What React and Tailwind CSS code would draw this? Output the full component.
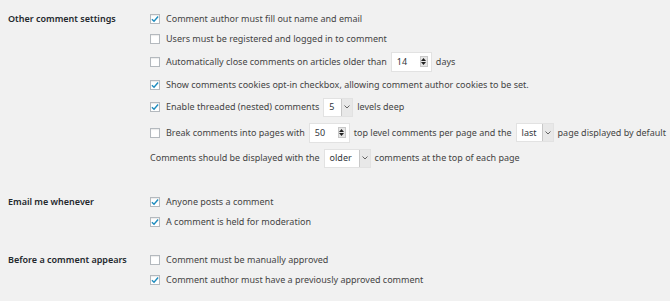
import React from 'react';

function Check({ checked }) {
  return (
    <span className="mr-[6px] flex h-[10px] w-[10px] shrink-0 items-center justify-center border border-[#b4b9be] bg-white shadow-[inset_0_1px_1px_rgba(0,0,0,0.08)]">
      {checked && (
        <svg width="9" height="8" viewBox="0 0 9 8">
          <path d="M1 4.2 L3.4 6.5 L8 1.2" fill="none" stroke="#1e8cbe" strokeWidth="1.6" />
        </svg>
      )}
    </span>
  );
}

function NumberBox({ value, width }) {
  return (
    <span className={`mx-[4px] flex h-[20px] ${width} items-center justify-between border border-[#e2e2e2] bg-white pl-[5px] pr-[3px] text-[#32373c]`}>
      <span>{value}</span>
      <span className="flex h-[11px] w-[8px] flex-col items-center justify-center gap-[1px] border border-[#c8c8c8] bg-[#e6e6e6]">
        <svg width="5" height="3" viewBox="0 0 5 3"><path d="M0 3 L2.5 0 L5 3 Z" fill="#222" /></svg>
        <svg width="5" height="3" viewBox="0 0 5 3"><path d="M0 0 L2.5 3 L5 0 Z" fill="#222" /></svg>
      </span>
    </span>
  );
}

function SelectBox({ value, width }) {
  return (
    <span className={`mx-[4px] flex h-[19px] ${width} items-stretch border border-[#e2e2e2] bg-white text-[#32373c]`}>
      <span className="flex flex-1 items-center pl-[5px]">{value}</span>
      <span className="flex w-[11px] items-center justify-center border-l border-[#c8c8c8] bg-[#e8e8e8]">
        <svg width="6" height="4" viewBox="0 0 6 4"><path d="M0.5 0.5 L3 3 L5.5 0.5" fill="none" stroke="#555" strokeWidth="0.9" /></svg>
      </span>
    </span>
  );
}

function Row({ h, checked, box = true, children }) {
  return (
    <div className={`flex ${h} items-center whitespace-nowrap`}>
      {box && <Check checked={checked} />}
      {children}
    </div>
  );
}

function Label({ children }) {
  return (
    <div className="flex h-[20px] w-[142px] shrink-0 items-center font-semibold text-[#23282d]">{children}</div>
  );
}

export default function App() {
  return (
    <div className="h-[301px] w-[670px] overflow-hidden bg-[#f1f1f1] pl-[8px] pt-[9px] text-[9px] text-[#444] [font-family:'Noto_Sans',sans-serif]">
      <div className="flex">
        <Label>Other comment settings</Label>
        <div className="flex flex-col">
          <Row h="h-[20px]" checked>Comment author must fill out name and email</Row>
          <Row h="h-[20px]">Users must be registered and logged in to comment</Row>
          <Row h="h-[25px]">
            Automatically close comments on articles older than
            <NumberBox value="14" width="w-[41px]" />
            days
          </Row>
          <Row h="h-[21px]" checked>Show comments cookies opt-in checkbox, allowing comment author cookies to be set.</Row>
          <Row h="h-[24px]" checked>
            Enable threaded (nested) comments
            <SelectBox value="5" width="w-[30px]" />
            levels deep
          </Row>
          <Row h="h-[27px]">
            Break comments into pages with
            <NumberBox value="50" width="w-[41px]" />
            top level comments per page and the
            <SelectBox value="last" width="w-[38px]" />
            page displayed by default
          </Row>
          <Row h="h-[24px]" box={false}>
            Comments should be displayed with the
            <SelectBox value="older" width="w-[47px]" />
            comments at the top of each page
          </Row>
        </div>
      </div>

      <div className="mt-[22px] flex">
        <Label>Email me whenever</Label>
        <div className="flex flex-col">
          <Row h="h-[20px]" checked>Anyone posts a comment</Row>
          <Row h="h-[19px]" checked>A comment is held for moderation</Row>
        </div>
      </div>

      <div className="mt-[19px] flex">
        <Label>Before a comment appears</Label>
        <div className="flex flex-col">
          <Row h="h-[20px]">Comment must be manually approved</Row>
          <Row h="h-[19px]" checked>Comment author must have a previously approved comment</Row>
        </div>
      </div>
    </div>
  );
}
